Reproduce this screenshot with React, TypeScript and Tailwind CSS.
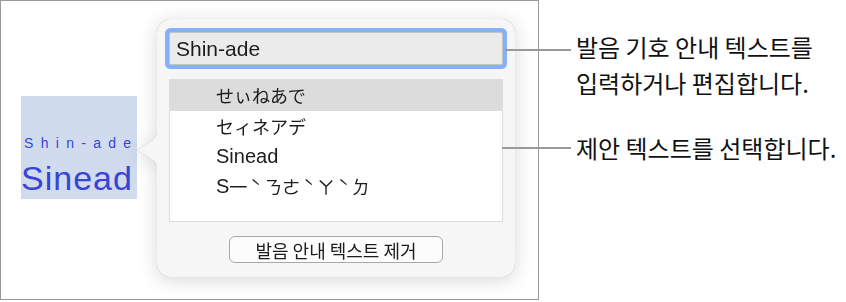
import React from "react";

const LAT = { fontFamily: '"Liberation Sans", Arial, sans-serif' };
const KR = { fontFamily: '"Noto Sans CJK KR", "Noto Sans", sans-serif' };
const JP = { fontFamily: '"Noto Sans CJK JP", sans-serif' };
const TC = { fontFamily: '"Noto Sans CJK TC", sans-serif' };

export default function App() {
  return (
    <div className="w-[846px] h-[302px] bg-white flex text-[#1c1c1c]">
      {/* frame */}
      <div className="w-[539px] h-[300px] shrink-0 border border-[#9a9a9a] flex items-start">
        {/* selected text */}
        <div className="ml-[20px] mt-[95px] w-[116px] h-[103px] bg-[#d0dcee] flex flex-col text-[#3843d8]" style={LAT}>
          <div className="pt-[39px] pl-[3px] text-[14px] leading-[16px] tracking-[7.3px] whitespace-nowrap">Shin-ade</div>
          <div className="mt-[8px] text-[34px] leading-[38px] tracking-[1px] whitespace-nowrap">Sinead</div>
        </div>

        {/* popover */}
        <div className="relative ml-[20px] mt-[18px] [filter:drop-shadow(0_0_0.6px_rgba(0,0,0,0.35))_drop-shadow(0_3px_9px_rgba(0,0,0,0.16))]">
          <svg className="absolute left-[-20px] top-[108px]" width="21" height="46" viewBox="0 0 21 46">
            <path d="M21 0 C21 9 17 13 11 16 L1 22 C0.3 22.6 0.3 23.4 1 24 L11 30 C17 33 21 37 21 46 Z" fill="#f6f6f6" />
          </svg>
          <div className="w-[358px] h-[258px] rounded-[14px] bg-[#f6f6f6] px-[12px] pt-[13px] flex flex-col">
            <div className="h-[33px] rounded-[2px] bg-[#ebebeb] border border-[#c4c4c4] ring-4 ring-[#86b0f7] flex items-center pl-[6px] text-[21px]" style={LAT}>
              Shin-ade
            </div>
            <div className="mt-[14px] h-[143px] bg-white border border-[#dddddd] flex flex-col">
              <div className="h-[31px] bg-[#dcdcdc] flex items-center pl-[46px] text-[18px]" style={JP}>せぃねあで</div>
              <div className="h-[30px] flex items-center pl-[46px] text-[18px]" style={JP}>セィネアデ</div>
              <div className="h-[30px] flex items-center pl-[46px] text-[20px]" style={LAT}>Sinead</div>
              <div className="h-[30px] flex items-center pl-[46px] text-[18px] whitespace-nowrap">
                <span className="text-[20px]" style={LAT}>S</span>
                <span style={TC}>
                  一<span className="mx-[3px]">ˋ</span>ㄋㄜ<span className="mx-[3px]">ˋ</span>ㄚ<span className="mx-[3px]">ˋ</span>ㄉ
                </span>
              </div>
            </div>
            <div className="mt-[14px] self-center w-[214px] h-[27px] rounded-[6px] border border-[#a8a8a8] bg-[#fcfcfc] flex items-center justify-center text-[18px] leading-none" style={KR}>
              발음 안내 텍스트 제거
            </div>
          </div>
        </div>
      </div>

      {/* callouts */}
      <div className="flex flex-col pt-[29px] text-[24px] leading-[36px] text-[#111]" style={KR}>
        <div className="flex items-start">
          <div className="relative z-10 ml-[-34px] mt-[20px] w-[66px] h-[2px] bg-[#9a9a9a] shrink-0" />
          <div className="ml-[5px] whitespace-nowrap">
            <div>발음 기호 안내 텍스트를</div>
            <div>입력하거나 편집합니다.</div>
          </div>
        </div>
        <div className="flex items-start mt-[29px]">
          <div className="relative z-10 ml-[-37px] mt-[17px] w-[69px] h-[2px] bg-[#9a9a9a] shrink-0" />
          <div className="ml-[5px] whitespace-nowrap">제안 텍스트를 선택합니다.</div>
        </div>
      </div>
    </div>
  );
}
